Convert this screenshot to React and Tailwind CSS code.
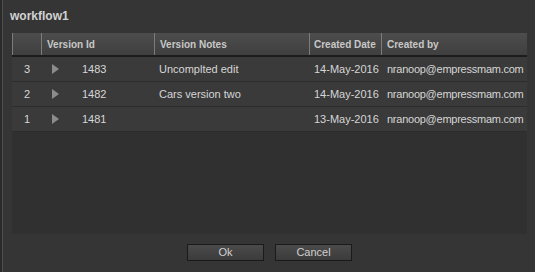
import React from 'react';

const rows = [
    { n: 3, id: '1483', notes: 'Uncomplted edit', date: '14-May-2016', by: 'nranoop@empressmam.com' },
    { n: 2, id: '1482', notes: 'Cars version two', date: '14-May-2016', by: 'nranoop@empressmam.com' },
    { n: 1, id: '1481', notes: '', date: '13-May-2016', by: 'nranoop@empressmam.com' },
];

const Arrow = () => (
    <svg width="7" height="10" viewBox="0 0 7 10" className="shrink-0">
        <path d="M0 0 L7 5 L0 10 Z" fill="#8c8c8c" />
    </svg>
);

const App = () => {
    return (
        <div
            className="w-[535px] h-[272px] bg-[#353535] flex overflow-hidden"
            style={{ fontFamily: '"Liberation Sans", Arial, sans-serif' }}
        >
            <div className="w-[2px] shrink-0 bg-[#2a2a2a]" />
            <div className="w-[1px] shrink-0 bg-[#4e4e4e]" />

            <div className="flex-1 min-w-0 flex flex-col">
                <div className="h-[33px] pl-[7px] pt-[9px] text-[12px] font-bold leading-[14px] text-[#d2d2d2]">
                    workflow1
                </div>

                <div className="ml-[9px] mr-[8px] h-[201px] bg-[#303030] flex flex-col">
                    <div className="h-[22px] flex bg-gradient-to-b from-[#4d4d4d] to-[#3f3f3f] border-b-2 border-[#1c1c1c] box-content text-[10px] font-bold text-[#c8c8c8]">
                        <div className="w-[29px] shrink-0 border-l border-[#7c7c7c]" />
                        <div className="w-[113px] shrink-0 border-l border-[#7c7c7c] pl-[5px] flex items-center">Version Id</div>
                        <div className="w-[155px] shrink-0 border-l border-[#7c7c7c] pl-[5px] flex items-center">Version Notes</div>
                        <div className="w-[72px] shrink-0 border-l border-[#7c7c7c] pl-[4px] flex items-center">Created Date</div>
                        <div className="flex-1 min-w-0 border-l border-[#7c7c7c] pl-[5px] flex items-center">Created by</div>
                    </div>

                    {rows.map((r) => (
                        <div
                            key={r.n}
                            className="h-[25px] flex items-center bg-[#3a3a3a] border-b border-[#2c2c2c] text-[11px] text-[#d6d6d6] whitespace-nowrap"
                        >
                            <div className="w-[30px] shrink-0 text-center">{r.n}</div>
                            <div className="w-[113px] shrink-0 flex items-center pl-[10px]">
                                <Arrow />
                                <span className="ml-[23px]">{r.id}</span>
                            </div>
                            <div className="w-[155px] shrink-0 pl-[4px]">{r.notes}</div>
                            <div className="w-[72px] shrink-0 pl-[4px]">{r.date}</div>
                            <div className="flex-1 min-w-0 pl-[5px] tracking-[-0.25px]">{r.by}</div>
                        </div>
                    ))}
                </div>

                <div className="flex justify-center gap-[11px] pt-[10px] pl-[1px]">
                    {['Ok', 'Cancel'].map((b) => (
                        <button
                            key={b}
                            className="w-[77px] h-[17px] bg-gradient-to-b from-[#4b4b4b] to-[#3b3b3b] border border-[#1a1a1a] text-[11px] leading-[15px] text-[#d0d0d0]"
                        >
                            {b}
                        </button>
                    ))}
                </div>
            </div>
        </div>
    );
};

export default App;
